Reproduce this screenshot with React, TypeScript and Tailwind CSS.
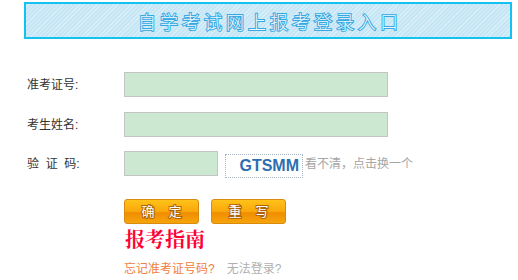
import React from 'react';

const App: React.FC = () => {
  return (
    <div className="w-[518px] h-[280px] bg-white relative overflow-hidden font-['Liberation_Sans','Noto_Sans_CJK_SC',sans-serif]">
      {/* 标题 */}
      <div className="ml-[24px] mt-[2px] w-[488px] h-[37px] border-2 border-[#13c2f0] bg-[#c6e6f6] bg-[repeating-linear-gradient(135deg,#c6e6f6_0px,#c6e6f6_2px,#d8effa_2px,#d8effa_3px)] flex items-center justify-center">
        <span className="text-[18px] tracking-[4px] pl-[4px] text-[#eef9ff] [-webkit-text-stroke:2px_#36a8e2] [paint-order:stroke_fill] font-['Noto_Sans_CJK_SC',sans-serif] font-light leading-none">
          自学考试网上报考登录入口
        </span>
      </div>

      <div className="ml-[27px] mt-[33px] flex flex-col text-[12px] text-[#333]">
        <div className="flex items-center h-[25px]">
          <span className="w-[97px]">准考证号:</span>
          <div className="w-[264px] h-[25px] bg-[#cde8d0] border border-[#c4c4c4]" />
        </div>
        <div className="flex items-center h-[25px] mt-[15px]">
          <span className="w-[97px]">考生姓名:</span>
          <div className="w-[264px] h-[25px] bg-[#cde8d0] border border-[#c4c4c4]" />
        </div>
        <div className="flex items-center h-[25px] mt-[14px]">
          <span className="w-[97px] whitespace-pre">验  证  码:</span>
          <div className="w-[94px] h-[25px] bg-[#cde8d0] border border-[#c4c4c4]" />
          <div className="ml-[7px] mt-[4px] w-[78px] h-[24px] border border-dotted border-[#a8b4c0] flex items-center justify-end pr-[3px]">
            <span className="text-[16px] font-bold text-[#2d6fb0] font-['Liberation_Sans',sans-serif]">GTSMM</span>
          </div>
          <span className="ml-[2px] text-[#a5a5a5]">看不清，点击换一个</span>
        </div>

        <div className="flex mt-[23px] ml-[97px] gap-[12px]">
          <button className="w-[75px] h-[25px] rounded-[3px] border border-[#d98a10] bg-[linear-gradient(#ffc21a,#f9a70a_50%,#f08d00_55%,#f6a40c)] text-white text-[13px] tracking-[14px] pl-[14px] [-webkit-text-stroke:2px_#b06400] [paint-order:stroke_fill]">
            确定
          </button>
          <button className="w-[75px] h-[25px] rounded-[3px] border border-[#d98a10] bg-[linear-gradient(#ffc21a,#f9a70a_50%,#f08d00_55%,#f6a40c)] text-white text-[13px] tracking-[14px] pl-[14px] [-webkit-text-stroke:2px_#b06400] [paint-order:stroke_fill]">
            重写
          </button>
        </div>

        <div className="ml-[98px] mt-[4px] text-[20px] font-bold text-[#ff0033] leading-[24px] font-['Liberation_Serif','Noto_Serif_CJK_SC','Noto_Sans_CJK_SC',serif]">
          报考指南
        </div>

        <div className="ml-[97px] mt-[8px] flex gap-[12px] text-[12px]">
          <span className="text-[#f0803c]">忘记准考证号码?</span>
          <span className="text-[#b0b0b0]">无法登录?</span>
        </div>
      </div>
    </div>
  );
};

export default App;
